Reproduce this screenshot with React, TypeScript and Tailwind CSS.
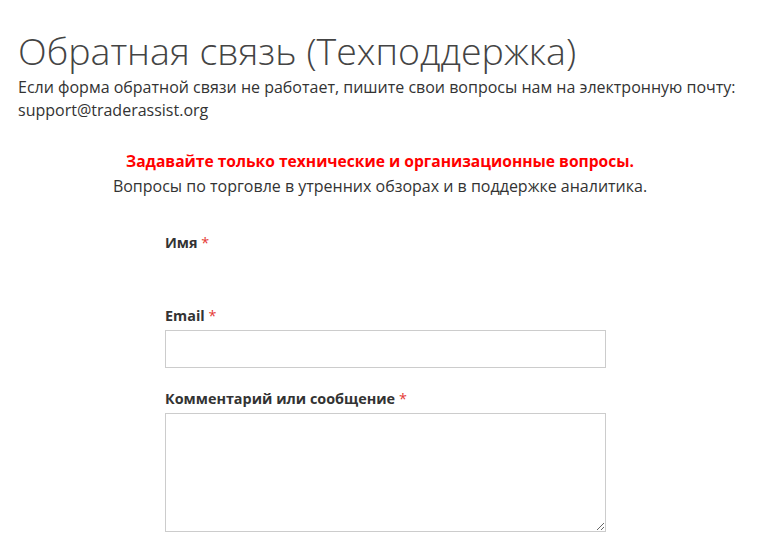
export default function App() {
  return (
    <div className="min-h-[558px] bg-white px-[18px] text-[#333] font-['Open_Sans',sans-serif]">
      <h1 className="pt-[28px] text-[37.5px] font-light leading-[46px] text-[#444]">
        Обратная связь (Техподдержка)
      </h1>
      <p className="mt-[2px] text-[16px] leading-[23px]">
        Если форма обратной связи не работает, пишите свои вопросы нам на электронную почту:
        <br />
        support@traderassist.org
      </p>

      <div className="mt-[27px] text-center">
        <p className="text-[15.6px] font-bold leading-[25px] text-[#f00]">
          Задавайте только технические и организационные вопросы.
        </p>
        <p className="text-[16px] leading-[25px]">
          Вопросы по торговле в утренних обзорах и в поддержке аналитика.
        </p>
      </div>

      <form className="ml-[147px] mt-[34px] w-[441px]">
        <label className="block text-[14.4px] font-bold leading-[20px] text-[#333]">
          Имя <span className="font-normal text-[#e53935]">*</span>
        </label>
        <div className="h-[53px]" />

        <label className="mb-[4px] block text-[14.4px] font-bold leading-[20px] text-[#333]">
          Email <span className="font-normal text-[#e53935]">*</span>
        </label>
        <input
          type="email"
          className="block h-[38px] w-full border border-[#ccc] bg-white px-2 outline-none"
        />

        <label className="mb-[4px] mt-[21px] block text-[14.4px] font-bold leading-[20px] text-[#333]">
          Комментарий или сообщение <span className="font-normal text-[#e53935]">*</span>
        </label>
        <textarea className="block h-[119px] w-full resize-y border border-[#ccc] bg-white px-2 outline-none" />
      </form>
    </div>
  );
}
